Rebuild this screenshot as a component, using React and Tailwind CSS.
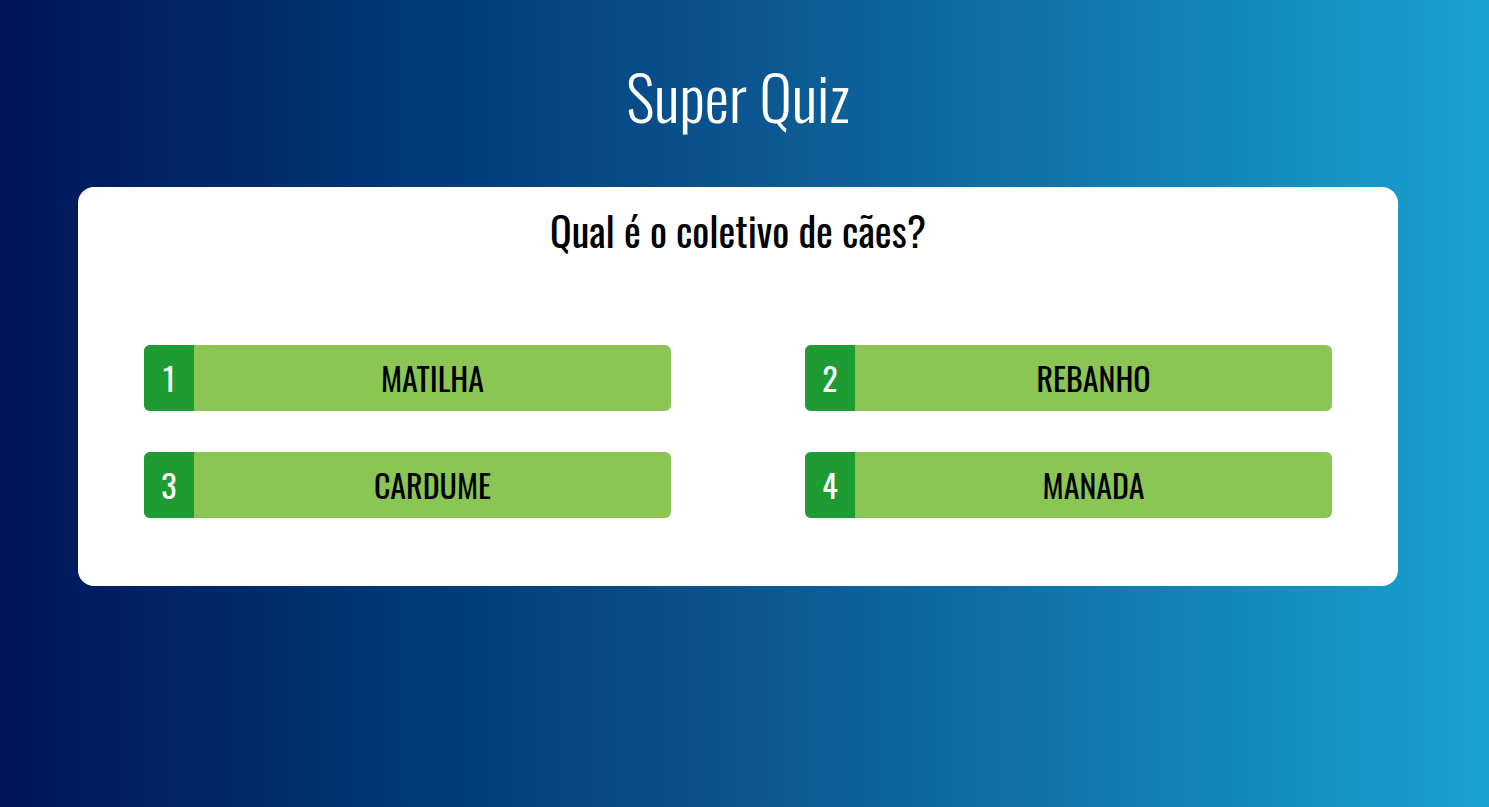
const answers = [
  { n: 1, text: 'MATILHA' },
  { n: 2, text: 'REBANHO' },
  { n: 3, text: 'CARDUME' },
  { n: 4, text: 'MANADA' },
]

export default function App() {
  return (
    <div className="min-h-screen w-full bg-gradient-to-r from-[#01145a] via-[#0c5590] to-[#19a3d1] font-['Oswald',sans-serif]">
      <div className="w-[1476px]">
        <div className="flex flex-col items-center pt-[56px]">
          <h1 className="text-white text-[61px] leading-[80px] font-light">Super Quiz</h1>
        </div>
        <div className="mx-[78px] mt-[51px] h-[399px] bg-white rounded-[16px] flex flex-col items-center">
          <h2 className="mt-[18px] text-black text-[40px] leading-[50px]">Qual é o coletivo de cães?</h2>
          <div className="w-full px-[66px] mt-[90px] grid grid-cols-2 gap-x-[134px] gap-y-[41px]">
            {answers.map((a) => (
              <div key={a.n} className="flex h-[66px] rounded-[6px] overflow-hidden bg-[#8bc554]">
                <div className="w-[50px] bg-[#1e9c33] flex items-center justify-center text-white text-[32px]">
                  {a.n}
                </div>
                <div className="flex-1 flex items-center justify-center text-black text-[32px]">
                  {a.text}
                </div>
              </div>
            ))}
          </div>
        </div>
      </div>
    </div>
  )
}
